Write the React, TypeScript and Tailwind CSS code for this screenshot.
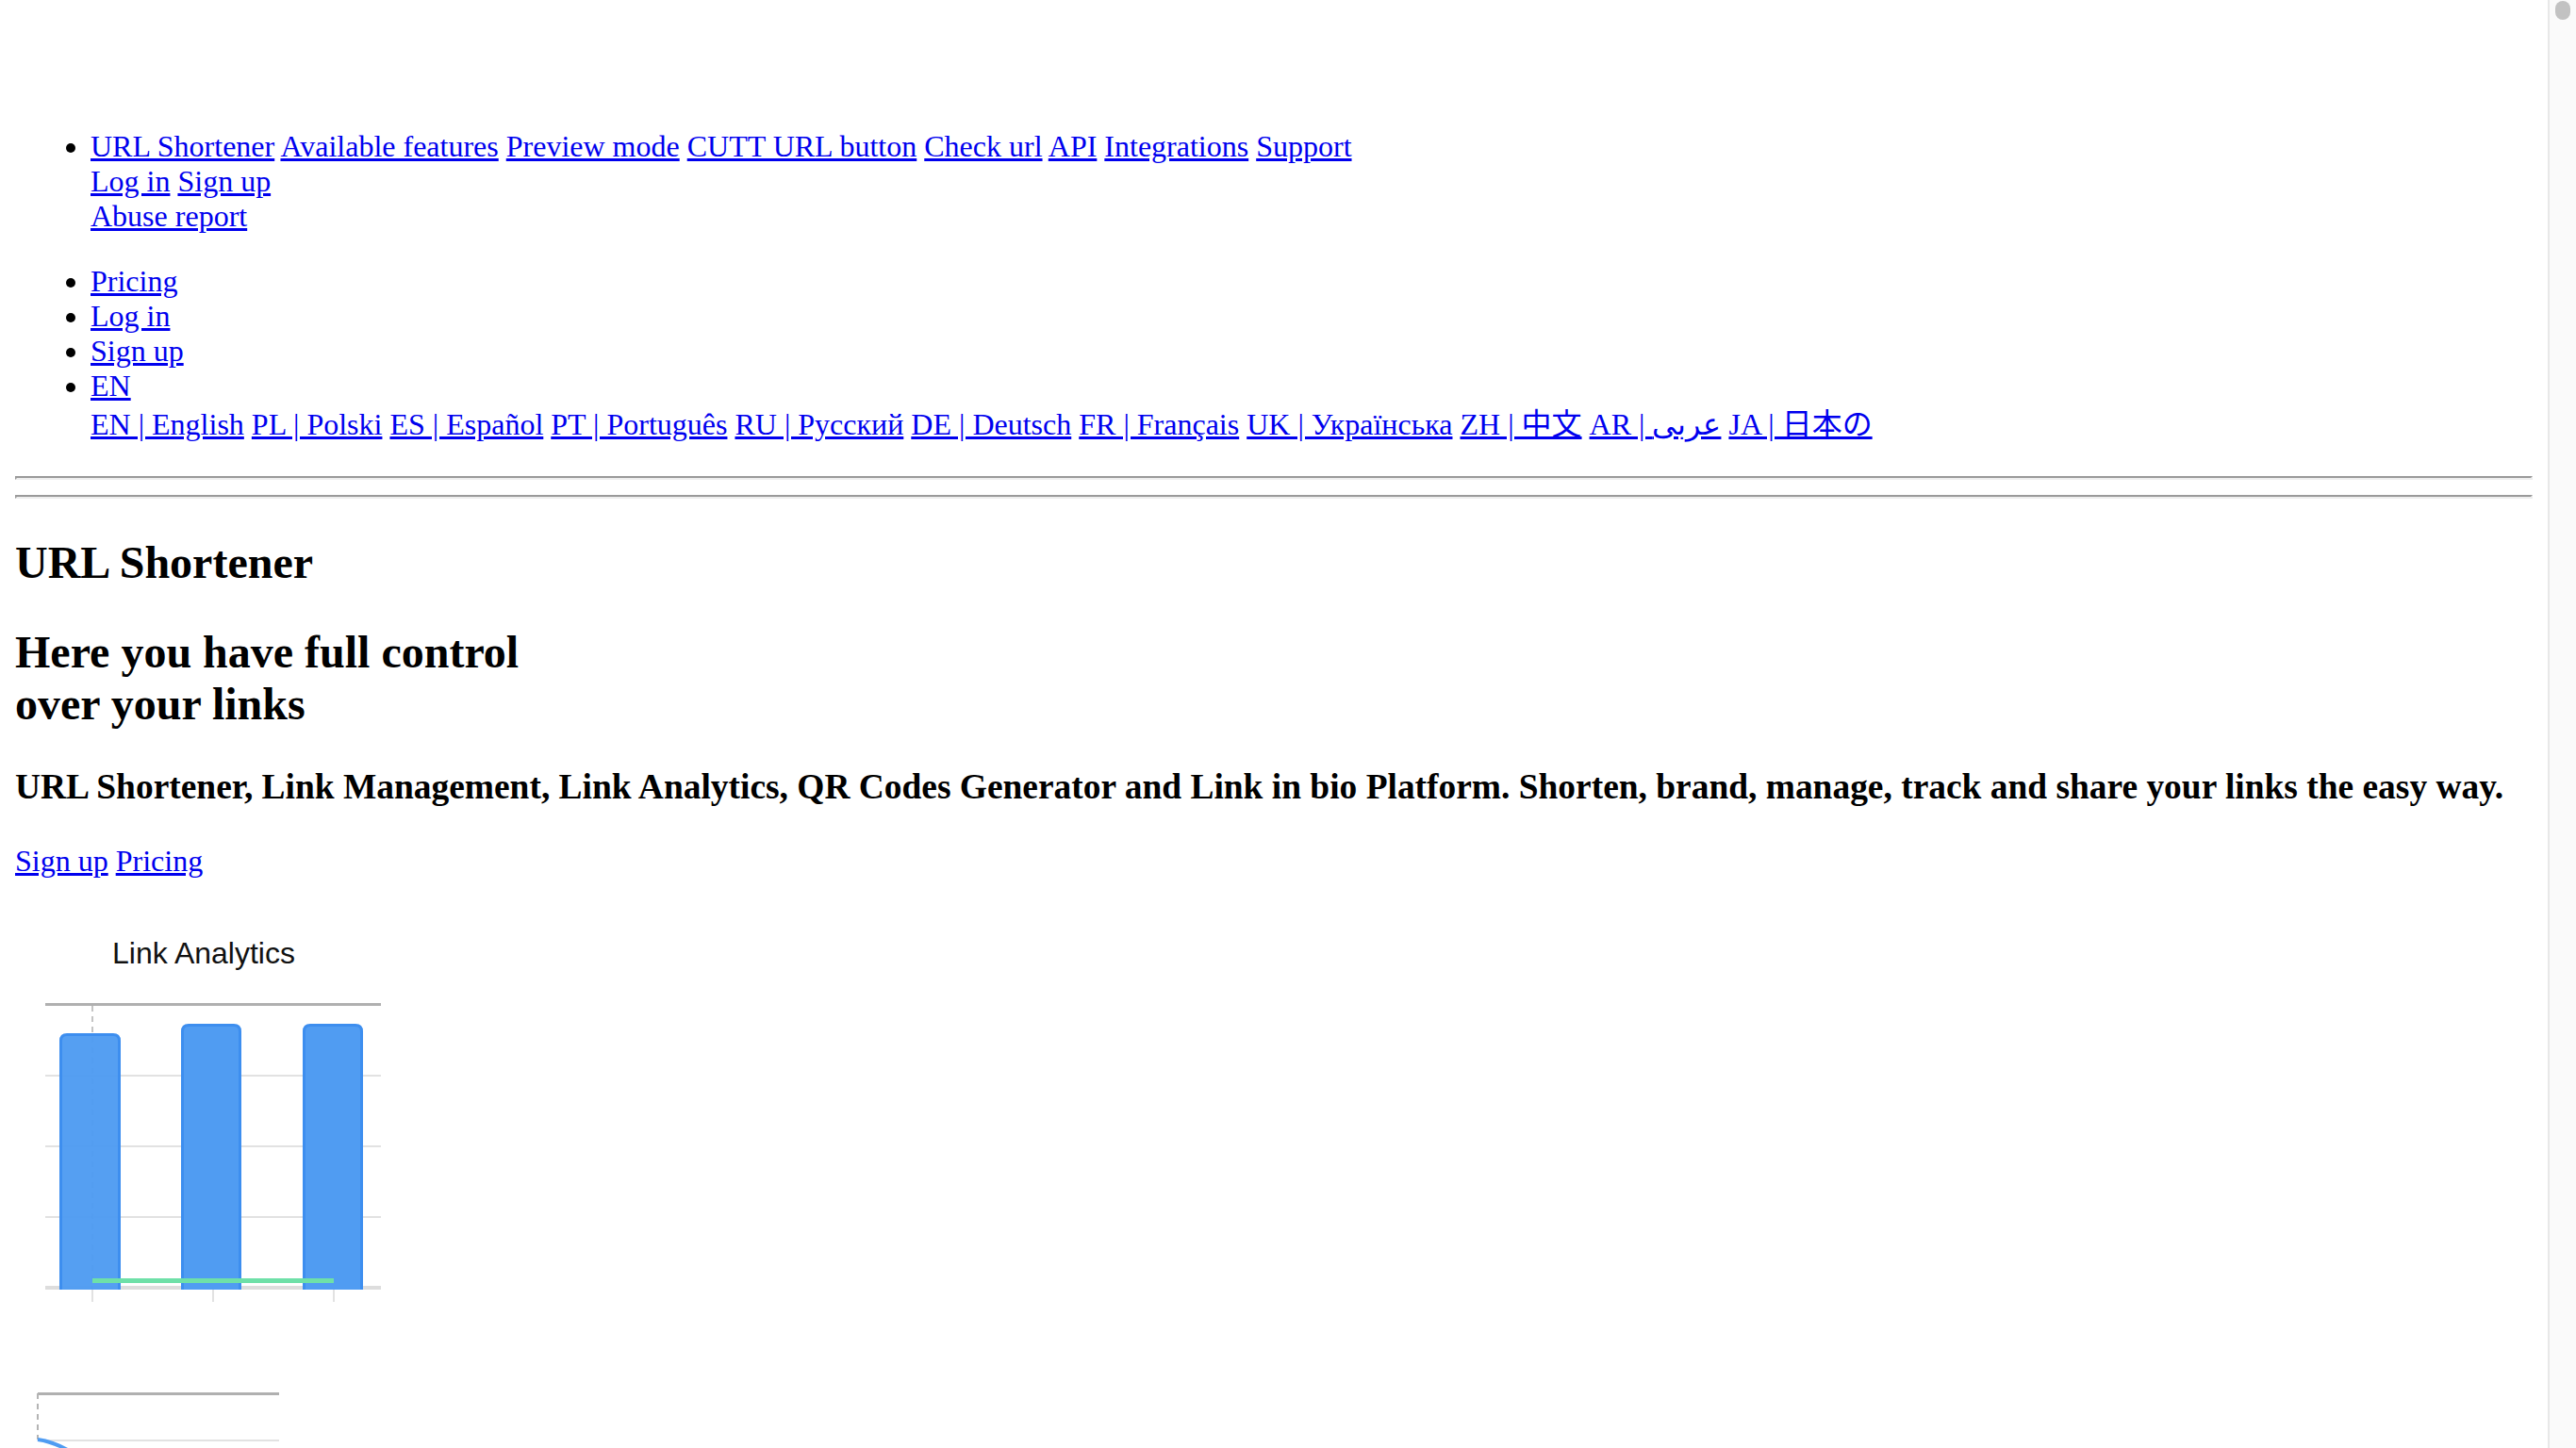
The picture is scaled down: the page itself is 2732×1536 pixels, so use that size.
import React from "react";

const navLinks = [
  "URL Shortener",
  "Available features",
  "Preview mode",
  "CUTT URL button",
  "Check url",
  "API",
  "Integrations",
  "Support",
];

const langLinks = [
  "EN | English",
  "PL | Polski",
  "ES | Español",
  "PT | Português",
  "RU | Русский",
  "DE | Deutsch",
  "FR | Français",
  "UK | Українська",
  "ZH | 中文",
  "AR | عربى",
  "JA | 日本の",
];

const linkCls = "text-[#0000ee] underline";

const Links = ({ items }: { items: string[] }) => (
  <>
    {items.map((t, i) => (
      <React.Fragment key={t}>
        {i > 0 && " "}
        <a href="#" className={linkCls}>
          {t}
        </a>
      </React.Fragment>
    ))}
  </>
);

const Hr = () => (
  <div className="h-[4px] border-2 border-t-[#9a9a9a] border-l-[#9a9a9a] border-b-[#eeeeee] border-r-[#eeeeee]" />
);

// bar chart, drawn as the canvas was (400 wide)
const AnalyticsChart = () => (
  <svg width="400" height="430" viewBox="0 0 400 430" className="block">
    <text
      x="200"
      y="65"
      textAnchor="middle"
      fontSize="32"
      fontFamily="'Liberation Sans', Arial, sans-serif"
      fill="#111"
    >
      Link Analytics
    </text>
    <line x1="32" y1="184" x2="388" y2="184" stroke="#e2e2e2" strokeWidth="2" />
    <line x1="32" y1="259" x2="388" y2="259" stroke="#e2e2e2" strokeWidth="2" />
    <line x1="32" y1="334" x2="388" y2="334" stroke="#e2e2e2" strokeWidth="2" />
    <line x1="32" y1="409" x2="388" y2="409" stroke="#dddddd" strokeWidth="4" />
    <line x1="82" y1="410" x2="82" y2="424" stroke="#e2e2e2" strokeWidth="2" />
    <line x1="210" y1="410" x2="210" y2="424" stroke="#e2e2e2" strokeWidth="2" />
    <line x1="338" y1="410" x2="338" y2="424" stroke="#e2e2e2" strokeWidth="2" />
    <line x1="82" y1="110" x2="82" y2="410" stroke="#c4c4c4" strokeWidth="2" strokeDasharray="6 5" />
    <path d="M48.5 411 V147 Q48.5 140.5 55 140.5 H104 Q110.5 140.5 110.5 147 V411" fill="#509cf2" fillOpacity="0.97" stroke="#3d8eef" strokeWidth="3" />
    <path d="M177.5 411 V137 Q177.5 130.5 184 130.5 H232 Q238.5 130.5 238.5 137 V411" fill="#509cf2" stroke="#3d8eef" strokeWidth="3" />
    <path d="M306.5 411 V137 Q306.5 130.5 313 130.5 H361 Q367.5 130.5 367.5 137 V411" fill="#509cf2" stroke="#3d8eef" strokeWidth="3" />
    <line x1="32" y1="108.5" x2="388" y2="108.5" stroke="#b0b0b0" strokeWidth="3" />
    <line x1="82" y1="401.5" x2="338" y2="401.5" stroke="#6ee0a8" strokeWidth="5" />
  </svg>
);

const SecondChart = () => (
  <svg width="300" height="140" viewBox="0 0 300 140" className="block">
    <line x1="24" y1="78.5" x2="280" y2="78.5" stroke="#b0b0b0" strokeWidth="3" />
    <line x1="24" y1="78" x2="24" y2="127" stroke="#b4b4b4" strokeWidth="2" strokeDasharray="6 5" />
    <line x1="24" y1="128" x2="280" y2="128" stroke="#e2e2e2" strokeWidth="2" />
    <path d="M24 127 Q44 130 62 142" fill="none" stroke="#4f9cf2" strokeWidth="4" />
  </svg>
);

export default function App() {
  return (
    <div className="flex h-screen overflow-hidden bg-white text-black">
      <div className="min-w-0 flex-1 overflow-hidden px-4 font-['Liberation_Serif','Noto_Sans_CJK_JP',serif]">
        <div className="h-[105px]" />

        <ul className="mt-8 list-disc pl-[80px] text-[32px] leading-[37px]">
          <li>
            <div>
              <Links items={navLinks} />
            </div>
            <div>
              <Links items={["Log in", "Sign up"]} />
            </div>
            <div>
              <Links items={["Abuse report"]} />
            </div>
          </li>
        </ul>

        <ul className="mt-8 list-disc pb-[4px] pl-[80px] text-[32px] leading-[37px]">
          <li>
            <a href="#" className={linkCls}>Pricing</a>
          </li>
          <li>
            <a href="#" className={linkCls}>Log in</a>
          </li>
          <li>
            <a href="#" className={linkCls}>Sign up</a>
          </li>
          <li>
            <a href="#" className={linkCls}>EN</a>
            <div className="pt-[4px] whitespace-nowrap">
              <Links items={langLinks} />
            </div>
          </li>
        </ul>

        <div className="mt-8">
          <Hr />
        </div>
        <div className="mt-4">
          <Hr />
        </div>

        <h1 className="mt-10 text-[48px] font-bold leading-[55px]">URL Shortener</h1>
        <h2 className="mt-10 text-[48px] font-bold leading-[55px]">
          Here you have full control
          <br />
          over your links
        </h2>
        <h3 className="mt-[39px] whitespace-nowrap text-[37.44px] font-bold leading-[43px]">
          URL Shortener, Link Management, Link Analytics, QR Codes Generator and Link in bio
          Platform. Shorten, brand, manage, track and share your links the easy way.
        </h3>
        <p className="mt-[39px] text-[32px] leading-[37px]">
          <Links items={["Sign up", "Pricing"]} />
        </p>

        <div className="mt-[25px]">
          <AnalyticsChart />
        </div>
        <div className="mt-[13px]">
          <SecondChart />
        </div>
      </div>

      {/* scrollbar */}
      <div className="flex w-[30px] shrink-0 justify-center border-l-2 border-[#e8e8e8] bg-[#fafafa]">
        <div className="mt-[1px] h-[20px] w-[16px] rounded-full bg-[#c2c2c2]" />
      </div>
    </div>
  );
}
